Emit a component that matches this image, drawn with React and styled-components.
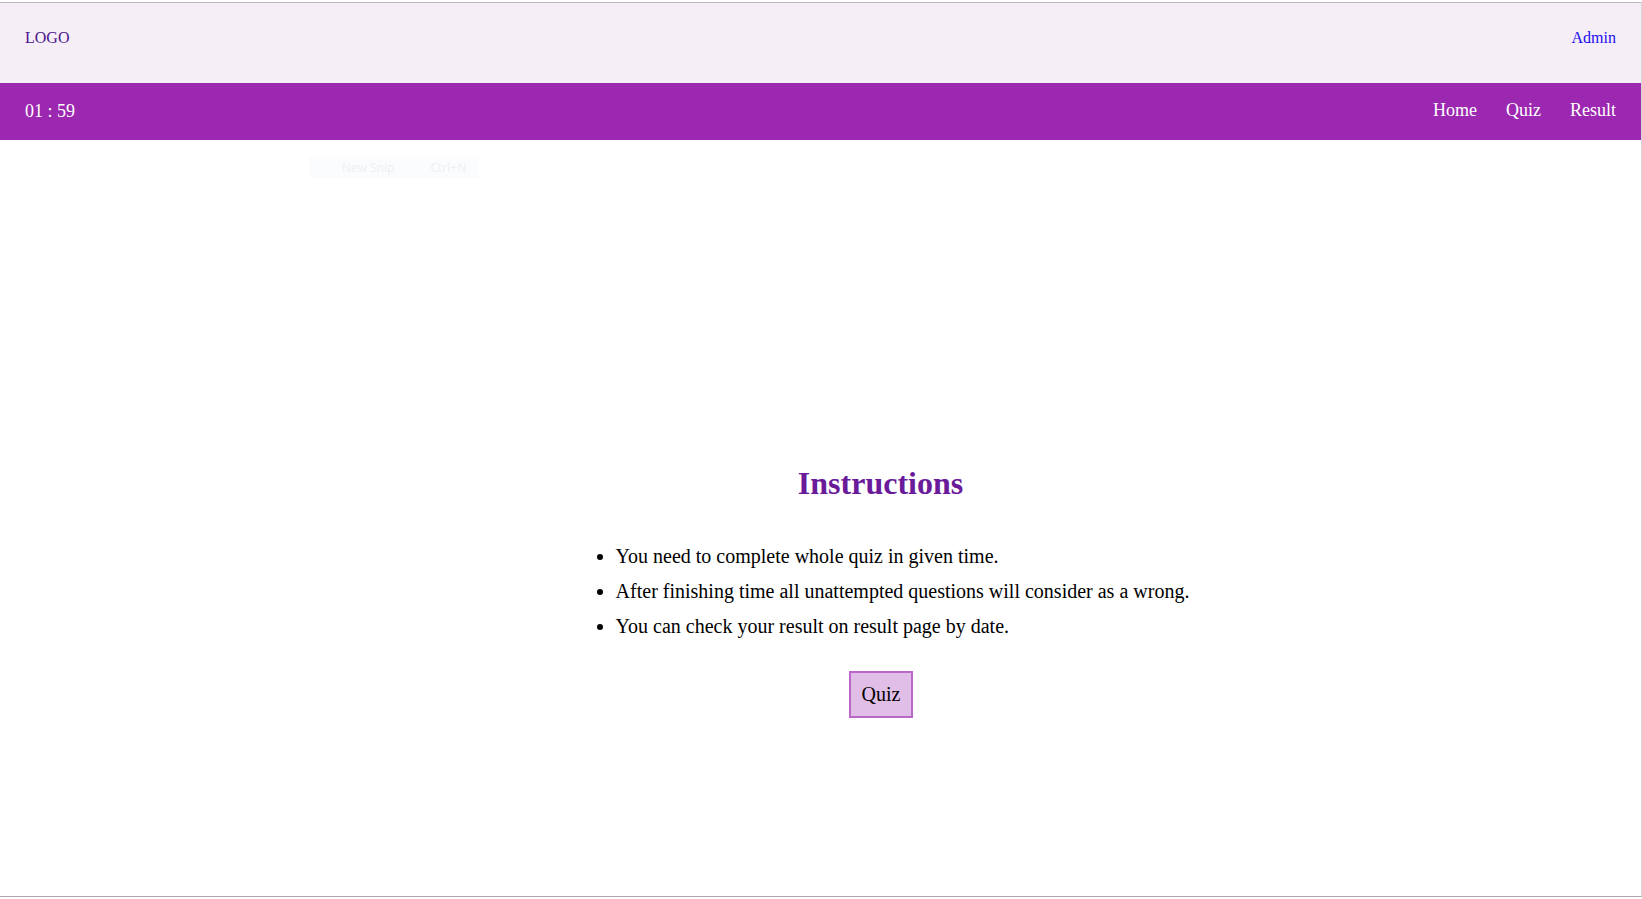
import React from 'react';
import styled, { createGlobalStyle } from 'styled-components';

const GlobalStyle = createGlobalStyle`
  html, body {
    margin: 0;
    padding: 0;
    background: #ffffff;
    font-family: "Liberation Serif", "Times New Roman", serif;
  }
`;

const Frame = styled.div`
  position: relative;
  margin-top: 2px;
  width: 1641px;
  height: 893px;
  border-top: 1px solid #b8b8bc;
  border-right: 1px solid #d6d6d8;
  border-bottom: 1px solid #a9a9ab;
  display: flex;
  flex-direction: column;
  overflow: hidden;
`;

const TopBar = styled.header`
  height: 80px;
  box-sizing: border-box;
  padding: 26px 25px 0 25px;
  background: #f6eef7;
  display: flex;
  justify-content: space-between;
  align-items: flex-start;
  font-size: 16px;
`;

const Logo = styled.div`
  color: #4a148c;
`;

const AdminLink = styled.a`
  color: #1a0dee;
  text-decoration: none;
  cursor: pointer;
`;

const NavBar = styled.nav`
  height: 57px;
  box-sizing: border-box;
  padding: 0 25px 2px 25px;
  background: #9c27b0;
  color: #ffffff;
  display: flex;
  justify-content: space-between;
  align-items: center;
  font-size: 18px;
`;

const Timer = styled.div`
  margin-top: 2px;
`;

const NavLinks = styled.div`
  display: flex;
  gap: 29px;
`;

const NavLink = styled.a`
  color: #ffffff;
  text-decoration: none;
  cursor: pointer;
`;

const Main = styled.main`
  flex: 1;
  display: flex;
  flex-direction: column;
  align-items: center;
  padding-top: 325px;
  padding-left: 120px;
`;

const Heading = styled.h1`
  margin: 0;
  font-size: 32px;
  font-weight: bold;
  color: #6a1b9a;
`;

const RuleList = styled.ul`
  margin: 43px 0 0 4px;
  padding-left: 40px;
  font-size: 20px;
  color: #000000;
`;

const Rule = styled.li`
  line-height: 23px;
  & + & {
    margin-top: 12px;
  }
`;

const StartButton = styled.button`
  margin: 33px 0 0 1px;
  padding: 10px 11px;
  font-family: "Liberation Serif", "Times New Roman", serif;
  font-size: 20px;
  line-height: 23px;
  color: #000000;
  background: #e1bee7;
  border: 2px solid #ba68c8;
  cursor: pointer;
`;

/* faint ghost of a snipping-tool menu left on the capture */
const GhostMenu = styled.div`
  position: absolute;
  left: 309px;
  top: 154px;
  width: 169px;
  height: 21px;
  background: #fbfcfe;
  display: flex;
  align-items: center;
  gap: 36px;
  padding-left: 33px;
  box-sizing: border-box;
  font-family: "Open Sans", sans-serif;
  font-size: 12px;
  color: #eef0f4;
`;

const rules = [
  'You need to complete whole quiz in given time.',
  'After finishing time all unattempted questions will consider as a wrong.',
  'You can check your result on result page by date.',
];

export default function App() {
  return (
    <>
      <GlobalStyle />
      <Frame>
        <TopBar>
          <Logo>LOGO</Logo>
          <AdminLink>Admin</AdminLink>
        </TopBar>
        <NavBar>
          <Timer>01 : 59</Timer>
          <NavLinks>
            <NavLink>Home</NavLink>
            <NavLink>Quiz</NavLink>
            <NavLink>Result</NavLink>
          </NavLinks>
        </NavBar>
        <Main>
          <Heading>Instructions</Heading>
          <RuleList>
            {rules.map((rule) => (
              <Rule key={rule}>{rule}</Rule>
            ))}
          </RuleList>
          <StartButton>Quiz</StartButton>
        </Main>
        <GhostMenu>
          <span>New Snip</span>
          <span>Ctrl+N</span>
        </GhostMenu>
      </Frame>
    </>
  );
}
